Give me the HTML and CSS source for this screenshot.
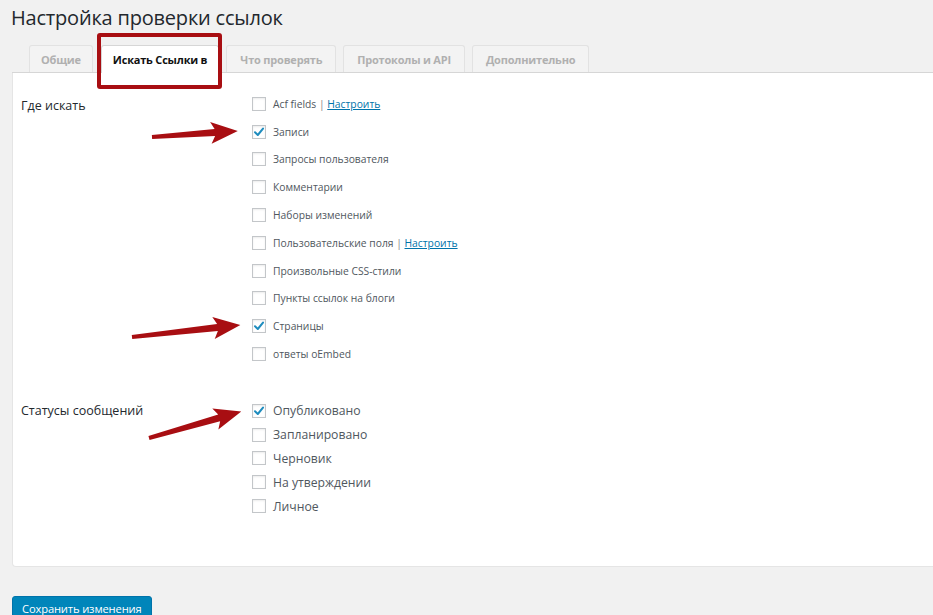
FILE: index.html
```html
<!DOCTYPE html>
<html lang="ru">
<head>
<meta charset="utf-8">
<title>Настройка проверки ссылок</title>
<link rel="stylesheet" href="styles.css">
</head>
<body>
<div class="wrap">
  <h1 class="title">Настройка проверки ссылок</h1>
  <nav class="tabs">
    <span class="tab tab-narrow">Общие</span>
    <span class="tab tab-active">Искать Ссылки в<span class="mark-box"></span></span>
    <span class="tab">Что проверять</span>
    <span class="tab">Протоколы и API</span>
    <span class="tab">Дополнительно</span>
  </nav>
  <div class="panel">
    <div class="label label-1">Где искать</div>
    <ul class="opts opts-small">
      <li><span class="cb"></span><span>Acf fields <span class="sep">|</span> <a class="link">Настроить</a></span></li>
      <li><span class="cb checked"><svg viewBox="0 0 14 14"><path d="M3 7.2 L5.8 10 L11 3.6"/></svg></span><span>Записи</span></li>
      <li><span class="cb"></span><span>Запросы пользователя</span></li>
      <li><span class="cb"></span><span>Комментарии</span></li>
      <li><span class="cb"></span><span>Наборы изменений</span></li>
      <li><span class="cb"></span><span>Пользовательские поля <span class="sep">|</span> <a class="link">Настроить</a></span></li>
      <li><span class="cb"></span><span>Произвольные CSS-стили</span></li>
      <li><span class="cb"></span><span>Пункты ссылок на блоги</span></li>
      <li><span class="cb checked"><svg viewBox="0 0 14 14"><path d="M3 7.2 L5.8 10 L11 3.6"/></svg></span><span>Страницы</span></li>
      <li><span class="cb"></span><span>ответы oEmbed</span></li>
    </ul>
    <div class="label label-2">Статусы сообщений</div>
    <ul class="opts opts-big">
      <li><span class="cb checked"><svg viewBox="0 0 14 14"><path d="M3 7.2 L5.8 10 L11 3.6"/></svg></span><span>Опубликовано</span></li>
      <li><span class="cb"></span><span>Запланировано</span></li>
      <li><span class="cb"></span><span>Черновик</span></li>
      <li><span class="cb"></span><span>На утверждении</span></li>
      <li><span class="cb"></span><span>Личное</span></li>
    </ul>
  </div>
  <button class="btn" type="button">Сохранить изменения</button>
</div>
<svg class="arrows" width="933" height="615" viewBox="0 0 933 615">
  <g fill="#a80e12">
    <polygon transform="translate(152 137) rotate(-4)" points="0,-2 63,-3.5 59,-11 86,0 59,11 63,3.5 0,2"/>
    <polygon transform="translate(132 337) rotate(-6.3)" points="0,-2 86,-3.5 82,-11 109,0 82,11 86,3.5 0,2"/>
    <polygon transform="translate(149 438) rotate(-16)" points="0,-2 73,-3.5 69,-11 96,0 69,11 73,3.5 0,2"/>
  </g>
</svg>
</body>
</html>
```

FILE: styles.css
```css
html, body {
  margin: 0;
  padding: 0;
}
body {
  background: #f1f1f1;
  font-family: "Open Sans", "Noto Sans", "DejaVu Sans", sans-serif;
  color: #23282d;
  overflow: hidden;
  position: relative;
  width: 933px;
  height: 615px;
}
.wrap {
  padding: 0;
}
.title {
  margin: 0;
  padding: 4px 0 0 11px;
  font-size: 20px;
  font-weight: 400;
  line-height: 28px;
  color: #23282d;
  letter-spacing: -0.2px;
}
.tabs {
  display: flex;
  gap: 7px;
  margin: 13px 0 0 12px;
  padding-left: 17px;
  border-bottom: 1px solid #d6d6d6;
  height: 27px;
  align-items: flex-end;
}
.tab {
  position: relative;
  box-sizing: border-box;
  height: 27px;
  display: flex;
  align-items: center;
  padding: 0 13px;
  background: #f3f3f3;
  border: 1px solid #e2e2e2;
  border-bottom: none;
  border-radius: 3px 3px 0 0;
  font-size: 11px;
  font-weight: 700;
  letter-spacing: -0.2px;
  color: #b0b0b0;
  white-space: nowrap;
}
.tab-narrow {
  padding: 0 11px;
}
.tab-active {
  background: #fff;
  color: #111;
  height: 28px;
  margin-left: 1px;
  padding: 0 11px;
  margin-bottom: -1px;
  border-color: #d6d6d6;
}
.mark-box {
  position: absolute;
  top: -13px;
  left: -5px;
  right: -4px;
  bottom: -16px;
  border: 4px solid #a80e12;
  border-radius: 3px;
  pointer-events: none;
}
.panel {
  background: #fff;
  border: 1px solid #e5e5e5;
  border-top: none;
  border-radius: 0 0 0 4px;
  margin: 0 -20px 0 12px;
  padding: 17px 0 48px 8px;
  display: grid;
  grid-template-columns: 231px 1fr;
  row-gap: 31px;
}
.label {
  font-size: 12.5px;
  color: #23282d;
}
.label-1 {
  line-height: 28px;
  padding-top: 2px;
}
.label-2 {
  line-height: 24px;
}
.opts {
  list-style: none;
  margin: 0;
  padding: 0;
}
.opts li {
  display: flex;
  align-items: center;
  gap: 7px;
  color: #50575e;
}
.opts-small li {
  height: 27.8px;
  font-size: 10.3px;
}
.opts-big li {
  height: 23.8px;
  font-size: 12.2px;
}
.cb {
  box-sizing: border-box;
  width: 14px;
  height: 14px;
  flex: none;
  border: 1px solid #c3c6c9;
  background: #fff;
  box-shadow: inset 0 1px 2px rgba(0, 0, 0, 0.08);
  display: flex;
}
.cb svg {
  width: 14px;
  height: 14px;
  margin: -1px;
}
.cb path {
  fill: none;
  stroke: #1e8cbe;
  stroke-width: 2;
  stroke-linecap: round;
  stroke-linejoin: round;
}
.sep {
  color: #888;
}
.link {
  color: #0073aa;
  text-decoration: underline;
}
.btn {
  display: block;
  margin: 29px 0 0 12px;
  height: 28px;
  padding: 0 9px 2px;
  background: #0085ba;
  border: 1px solid #0073aa;
  border-radius: 3px;
  color: #fff;
  font-family: "Open Sans", "Noto Sans", sans-serif;
  font-size: 11.2px;
  letter-spacing: -0.15px;
  line-height: 24px;
}
.arrows {
  position: absolute;
  left: 0;
  top: 0;
  pointer-events: none;
}
```
